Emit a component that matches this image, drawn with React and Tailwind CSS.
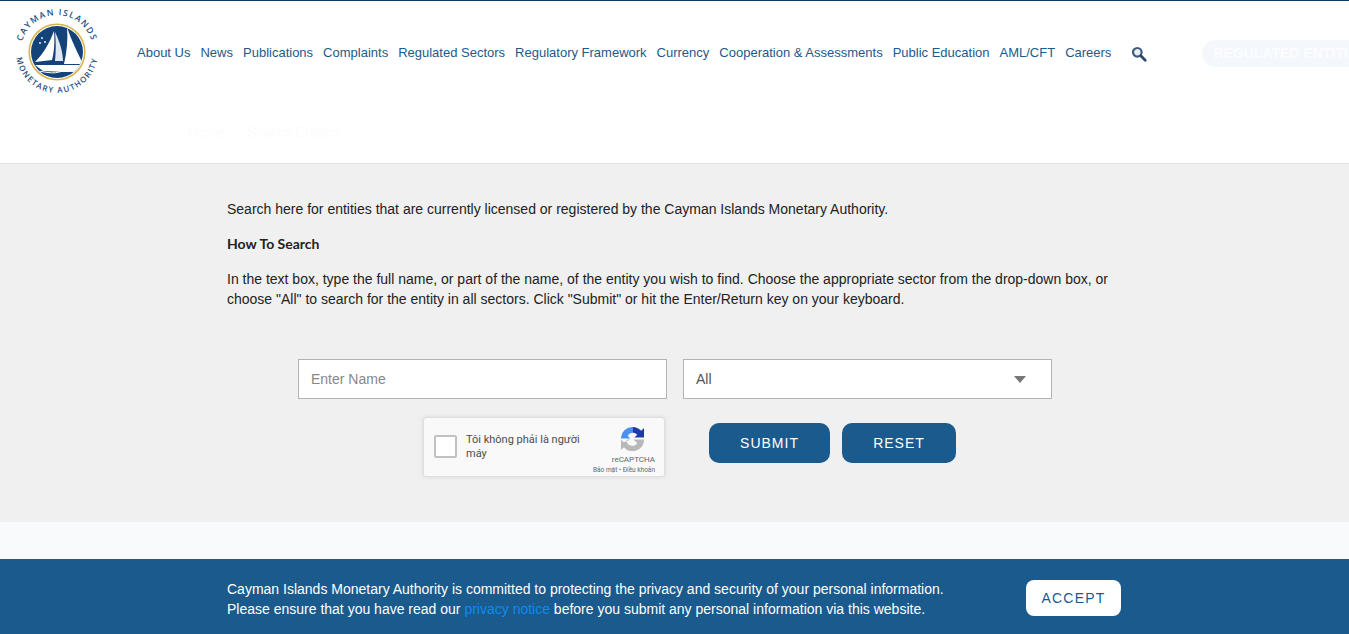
import React from "react";
import { ChevronRight } from "lucide-react";

const navItems = [
  "About Us",
  "News",
  "Publications",
  "Complaints",
  "Regulated Sectors",
  "Regulatory Framework",
  "Currency",
  "Cooperation & Assessments",
  "Public Education",
  "AML/CFT",
  "Careers",
];

const Logo = () => (
  <svg width="88" height="88" viewBox="0 0 88 88" className="shrink-0 overflow-visible">
    <defs>
      <path id="arcTop" d="M 9.5 31.8 A 36 36 0 0 1 78.5 31.8" />
      <path id="arcBottom" d="M 3 43 A 41 41 0 0 0 85 43" />
      <clipPath id="seal">
        <circle cx="44" cy="43" r="26" />
      </clipPath>
    </defs>
    <text fontSize="8.6" fontWeight="600" fill="#1c4f7e" textAnchor="middle" letterSpacing="1.35" fontFamily="'Open Sans', sans-serif">
      <textPath href="#arcTop" startOffset="50%">CAYMAN ISLANDS</textPath>
    </text>
    <text fontSize="8" fontWeight="600" fill="#1c4f7e" textAnchor="middle" letterSpacing="1.4" fontFamily="'Open Sans', sans-serif">
      <textPath href="#arcBottom" startOffset="50%">MONETARY AUTHORITY</textPath>
    </text>
    <circle cx="44" cy="43" r="27.8" fill="#fff" stroke="#d8b64e" strokeWidth="1.6" />
    <circle cx="44" cy="43" r="26" fill="#14437a" />
    <g clipPath="url(#seal)">
      {/* sails */}
      <path d="M22 53 C31 44 37 33 41 22 C42 33 41 44 39 51 Z" fill="#fff" />
      <path d="M42 23 C47 33 50 44 50 52 L42 52 C43 42 43 33 42 23 Z" fill="#dfe7f0" />
      <path d="M54 18 C58 31 65 44 70 55 L51 55 C54 42 55 30 54 18 Z" fill="#fff" />
      {/* hull and water */}
      <path d="M22 56 L71 56 C67 61 60 63 52 63 L30 62 Z" fill="#fff" />
      <path d="M17 63 C27 60 36 66 46 63 C56 60 62 65 72 61" stroke="#fff" strokeWidth="1" fill="none" />
      <circle cx="29" cy="29" r="0.9" fill="#fff" />
      <circle cx="32" cy="33" r="0.9" fill="#fff" />
      <circle cx="27" cy="34" r="0.9" fill="#fff" />
    </g>
  </svg>
);

const SearchIcon = () => (
  <svg width="16" height="16" viewBox="0 0 16 16">
    <circle cx="6.3" cy="6.3" r="4.3" fill="#e8eef4" stroke="#3c5a7c" strokeWidth="2.2" />
    <path d="M9.8 9.8 L14.2 14.2" stroke="#2f4a68" strokeWidth="2.8" strokeLinecap="round" />
  </svg>
);

const RecaptchaIcon = () => (
  <svg width="25" height="25" viewBox="0 0 26 26">
    <path d="M1 13 L1 12 A12 12 0 0 1 13 1 L13 7 A6 6 0 0 0 8 10 L10.5 13 Z" fill="#4a90ee" />
    <path d="M13 1 A12 12 0 0 1 22 5 L25 2 L25 12 L15 12 L18 9 A6 6 0 0 0 13 7 Z" fill="#1c3aa9" />
    <path d="M1 14 L4 17 L11 14 L7 14 A6 6 0 0 0 18 18 L14 14 L25 14 A12 12 0 0 1 4 22 L1 25 Z" fill="#b8b8b8" />
  </svg>
);

const Captcha = () => (
  <div className="flex h-[60px] w-[242px] shrink-0 items-start rounded-[3px] border border-[#dfdfdf] bg-[#f9f9f9] shadow-[0_0_4px_rgba(0,0,0,0.1)]">
    <div className="ml-[10px] mt-[17px] h-[23px] w-[23px] rounded-[2px] border-2 border-[#c1c1c1] bg-white" />
    <div className="ml-[9px] mt-[15px] w-[125px] font-['Roboto',sans-serif] text-[11px] leading-[14px] text-[#4d4d4d]">
      Tôi không phải là người máy
    </div>
    <div className="ml-auto mr-[9px] mt-[8px] flex flex-col items-end font-['Roboto',sans-serif] text-[#666]">
      <div className="mr-[10px]">
        <RecaptchaIcon />
      </div>
      <div className="mt-[4px] text-[8px] leading-[9px]">reCAPTCHA</div>
      <div className="mt-[2px] whitespace-nowrap text-[6.5px] leading-[8px]">Bảo mật • Điều khoản</div>
    </div>
  </div>
);

export default function App() {
  return (
    <div className="flex h-[634px] flex-col overflow-hidden bg-white font-['Liberation_Sans',Arial,sans-serif]">
      {/* Header */}
      <header className="h-[164px] shrink-0 border-t border-b border-t-[#0d3a5e] border-b-[#e3e3e3] bg-white">
        <div className="flex h-[108px] items-start overflow-hidden">
          <div className="ml-[13px] mt-[8px]">
            <Logo />
          </div>
          <nav className="ml-[36px] mt-[43px] flex gap-[10px] whitespace-nowrap text-[13px] leading-[17px] text-[#1a5a8c]">
            {navItems.map((item) => (
              <a key={item} href="#">
                {item}
              </a>
            ))}
          </nav>
          <div className="ml-[20px] mt-[45px]">
            <SearchIcon />
          </div>
          <div className="ml-[55px] mt-[39px] flex h-[27px] w-[180px] shrink-0 items-center overflow-hidden whitespace-nowrap rounded-[14px] bg-[#f4f8fc] pl-[11px] text-[14px] font-bold text-[#fcfdfe]">
            REGULATED ENTITIES
          </div>
        </div>
        <div className="ml-[188px] mt-[15px] flex items-center gap-[6px] text-[14px] leading-[16px] text-[#fbfcfb]">
          <span>Home</span>
          <ChevronRight size={10} />
          <span>Search Entities</span>
        </div>
      </header>

      {/* Search section */}
      <main className="h-[358px] shrink-0 bg-[#f0f0f0] pl-[227px] pt-[35px] text-[14px] leading-[20px] text-[#222]">
        <p>Search here for entities that are currently licensed or registered by the Cayman Islands Monetary Authority.</p>
        <p className="mt-[15px] font-['Lato',sans-serif] font-bold">How To Search</p>
        <p className="mt-[15px] w-[895px]">
          In the text box, type the full name, or part of the name, of the entity you wish to find. Choose the appropriate sector from the drop-down box, or choose "All" to search for the entity in all sectors. Click "Submit" or hit the Enter/Return key on your keyboard.
        </p>

        <div className="ml-[71px] mt-[50px] flex gap-[16px]">
          <input
            placeholder="Enter Name"
            className="h-[40px] w-[369px] border border-[#b3b3b3] bg-white px-[12px] text-[14px] text-[#555] outline-none placeholder:text-[#888]"
          />
          <div className="flex h-[40px] w-[369px] items-center justify-between border border-[#b3b3b3] bg-white pl-[12px] pr-[25px] text-[14px] text-[#555]">
            All
            <span className="h-0 w-0 border-x-[6px] border-t-[7px] border-x-transparent border-t-[#777]" />
          </div>
        </div>

        <div className="ml-[196px] mt-[18px] flex items-start">
          <Captcha />
          <button className="ml-[44px] mt-[6px] h-[40px] w-[121px] rounded-[10px] bg-[#1a5a8c] text-[14px] font-medium tracking-[1px] text-white">
            SUBMIT
          </button>
          <button className="ml-[12px] mt-[6px] h-[40px] w-[114px] rounded-[10px] bg-[#1a5a8c] text-[14px] font-medium tracking-[1px] text-white">
            RESET
          </button>
        </div>
      </main>

      <div className="h-[37px] shrink-0 bg-[#f9fafc]" />

      {/* Privacy banner */}
      <div className="flex h-[75px] shrink-0 items-start bg-[#1a5a8c] pl-[227px] pt-[20px] text-[14px] leading-[20px] text-white">
        <p className="w-[760px]">
          Cayman Islands Monetary Authority is committed to protecting the privacy and security of your personal information.
          <br />
          Please ensure that you have read our <a href="#" className="text-[#0d8bf2]">privacy notice</a> before you submit any personal information via this website.
        </p>
        <button className="ml-[39px] mt-[1px] h-[36px] w-[95px] rounded-[8px] bg-white text-[14px] tracking-[1.2px] text-[#1a5a8c]">
          ACCEPT
        </button>
      </div>
    </div>
  );
}
